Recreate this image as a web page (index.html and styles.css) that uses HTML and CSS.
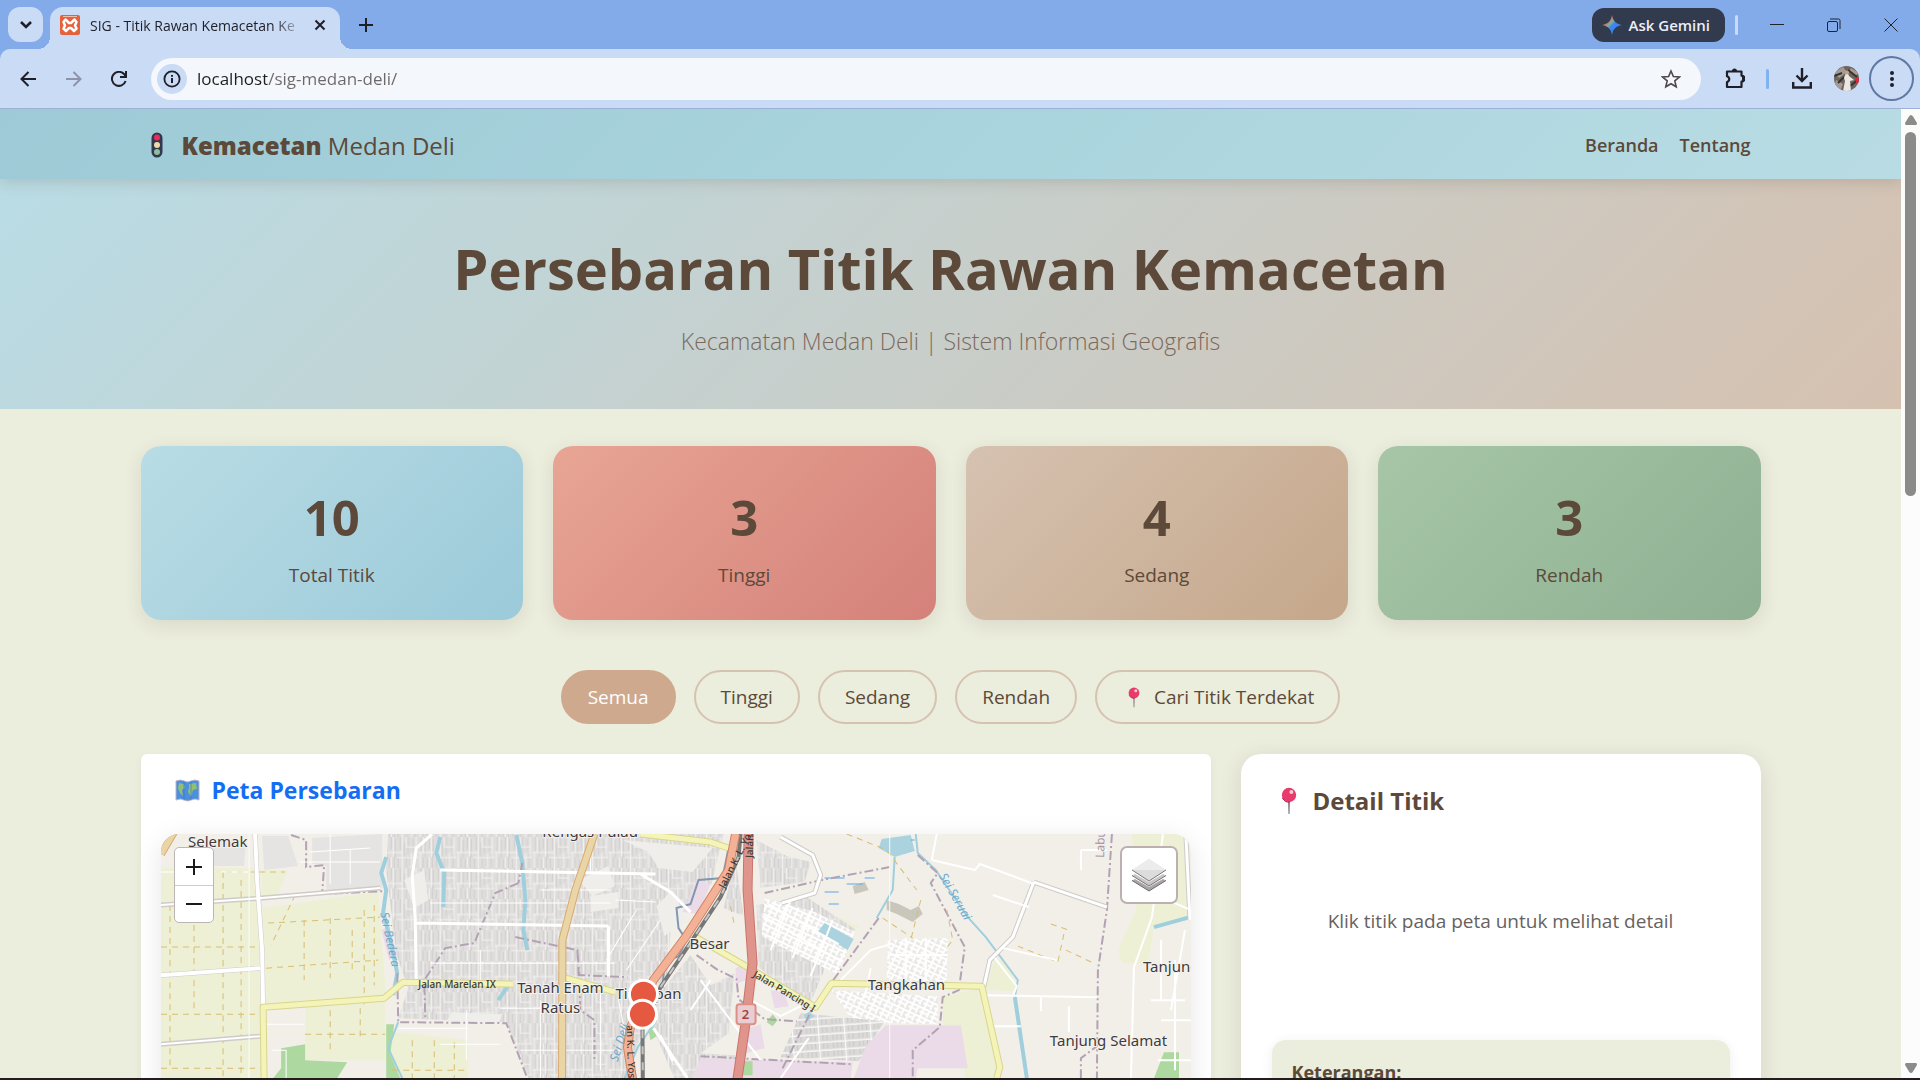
FILE: index.html
```html
<!DOCTYPE html>
<html lang="id">
<head>
<meta charset="utf-8">
<meta name="viewport" content="width=device-width, initial-scale=1">
<title>SIG - Titik Rawan Kemacetan</title>
<link rel="stylesheet" href="styles.css">
</head>
<body>
<svg class="defs" aria-hidden="true">
  <defs>
    <symbol id="pin" viewBox="0 0 16 28">
      <path d="M7 14h2l-.4 13h-1.2z" fill="#8d8488"/>
      <circle cx="8" cy="8" r="7.2" fill="#e83a6b"/>
      <path d="M1.500 11a7.200 7.200 0 0 0 7 4.200" fill="none" stroke="#9c2a52"/>
      <circle cx="10.400" cy="5" r="2" fill="#f3cdd2"/>
    </symbol>
  </defs>
</svg>

<header class="chrome">
  <div class="tabstrip">
    <button class="tab-search" aria-label="Cari tab"><svg width="14" height="10" viewBox="0 0 14 10"><path d="M2 2l5 5 5-5" fill="none" stroke="#1f1f28" stroke-width="2.600"/></svg></button>
    <div class="tab">
      <svg class="favicon" width="20" height="20" viewBox="0 0 20 20"><rect width="20" height="20" rx="2" fill="#e4613c"/><path d="M3 1.500h14" stroke="#f6b9a4"/><path d="M5.500 4.500L9 8h2l3.500-3.500 2 2.500-1.500 3.500 1.500 3-2.500 2.500L11 13H9l-3 3-2.500-2.500 1.500-3L3.500 7z" fill="none" stroke="#fff" stroke-width="2.500" stroke-linejoin="round"/></svg>
      <span class="tab-title">SIG - Titik Rawan Kemacetan Ke</span>
      <button class="tab-close" aria-label="Tutup tab"><svg width="12" height="12" viewBox="0 0 12 12"><path d="M1.500 1.500l9 9m0-9l-9 9" stroke="#1f1f28" stroke-width="2"/></svg></button>
    </div>
    <button class="new-tab" aria-label="Tab baru"><svg width="14" height="14" viewBox="0 0 14 14"><path d="M7 0v14M0 7h14" stroke="#1f1f28" stroke-width="2"/></svg></button>
    <button class="gemini"><svg width="20" height="20" viewBox="0 0 20 20"><defs><linearGradient id="gem" x1="0" y1="0" x2="1" y2="1"><stop offset=".25" stop-color="#ee5b4a"/><stop offset=".42" stop-color="#7fae9a"/><stop offset=".52" stop-color="#3f86ee"/><stop offset="1" stop-color="#2f7cf6"/></linearGradient></defs><path d="M10 0c1 6 4 9 10 10-6 1-9 4-10 10-1-6-4-9-10-10 6-1 9-4 10-10z" fill="url(#gem)"/></svg>Ask Gemini</button>
    <span class="strip-divider"></span>
    <div class="window-buttons">
      <button aria-label="Kecilkan"><svg width="14" height="14" viewBox="0 0 14 14"><path d="M0 6.500h14" stroke="#1f2430"/></svg></button>
      <button aria-label="Pulihkan"><svg width="14" height="14" viewBox="0 0 14 14"><rect x=".5" y="3.500" width="10" height="10" rx="1.500" fill="none" stroke="#1f2430"/><path d="M3 1h8.500a1.500 1.500 0 0 1 1.500 1.500V11" fill="none" stroke="#1f2430"/></svg></button>
      <button aria-label="Tutup"><svg width="14" height="14" viewBox="0 0 14 14"><path d="M.5.500l13 13m0-13l-13 13" stroke="#1f2430"/></svg></button>
    </div>
  </div>
  <div class="toolbar">
    <button class="tool" aria-label="Kembali"><svg width="17" height="16" viewBox="0 0 17 16"><path d="M16 8H2M8.500 1L1.500 8l7 7" fill="none" stroke="#1f1f28" stroke-width="2"/></svg></button>
    <button class="tool" aria-label="Maju"><svg width="17" height="16" viewBox="0 0 17 16"><path d="M1 8h14M8.500 1l7 7-7 7" fill="none" stroke="#8b94a8" stroke-width="2"/></svg></button>
    <button class="tool" aria-label="Muat ulang"><svg width="16" height="16" viewBox="0 0 16 16"><path d="M14.600 10A7 7 0 1 1 13 3l1.500 2" fill="none" stroke="#1f1f28" stroke-width="2"/><path d="M15 0v6H9" fill="none" stroke="#1f1f28" stroke-width="2"/></svg></button>
    <div class="omnibox">
      <button class="site-info" aria-label="Info situs"><svg width="18" height="18" viewBox="0 0 18 18"><circle cx="9" cy="9" r="7.600" fill="none" stroke="#1f1f28" stroke-width="1.800"/><path d="M9 8v5M9 5v1.800" stroke="#1f1f28" stroke-width="2"/></svg></button>
      <input class="url" type="text" value="localhost/sig-medan-deli/" aria-label="Alamat">
      <button class="star" aria-label="Bookmark"><svg width="20" height="20" viewBox="0 0 20 20"><path d="M10 2l2.400 5.500 6 .5-4.600 3.900 1.400 5.900L10 14.700l-5.200 3.100 1.400-5.900L1.600 8l6-.5z" fill="none" stroke="#51484a" stroke-width="1.600"/></svg></button>
    </div>
    <button class="tool ext" aria-label="Ekstensi"><svg width="20" height="21" viewBox="0 0 20 21"><path d="M2 3.500h14.500v4.200a3 3 0 0 1 0 6V19H2v-5a3 3 0 0 0 0-5.800z" fill="none" stroke="#1f1f28" stroke-width="2.200" stroke-linejoin="round"/><path d="M7 3a2.500 2.500 0 0 1 5 0zM17 8.500a2.400 2.400 0 0 1 0 4.800z" fill="#1f1f28"/></svg></button>
    <span class="tool-divider"></span>
    <button class="tool" aria-label="Unduhan"><svg width="20" height="21" viewBox="0 0 20 21"><path d="M10 0v12M4.500 7.500L10 13l5.500-5.500M1.200 14v5.500h17.600V14" fill="none" stroke="#1f1f28" stroke-width="2.400"/></svg></button>
    <button class="tool" aria-label="Profil"><svg width="25" height="25" viewBox="0 0 25 25"><defs><clipPath id="av"><circle cx="12.500" cy="12.500" r="12.500"/></clipPath></defs><g clip-path="url(#av)"><path d="M0 0h25v25H0z" fill="#6d6560"/><path d="M0 6l9-5 4 5-8 6zM2 14l7 4-3 7-6-3zM17 2l8 5-4 3-6-4z" fill="#a59b92"/><path d="M0 10l8-3M14 4l9 7M4 17l6-6M16 20l8-6" stroke="#37332f" stroke-width="2"/><path d="M22 12h3v5h-3z" fill="#d52a3c"/><path d="M12 7q2-1 3 3l5 4-4 1 1 10H9l2-10-1-3z" fill="#ebe8e4"/><circle cx="13" cy="6.500" r="2" fill="#c9a18b"/></g></svg></button>
    <button class="menu" aria-label="Menu"><svg width="4" height="16" viewBox="0 0 4 16" fill="#1f1f28"><circle cx="2" cy="2" r="2"/><circle cx="2" cy="8" r="2"/><circle cx="2" cy="14" r="2"/></svg></button>
  </div>
</header>

<div class="viewport">
  <div class="page">
    <nav class="navbar">
      <div class="container nav-row">
        <a class="brand" href="#"><svg width="12" height="26" viewBox="0 0 12 26"><rect x=".5" y=".5" width="11" height="25" rx="5.500" fill="#33384e"/><circle cx="6" cy="5.500" r="3" fill="#f0295a"/><circle cx="6" cy="13" r="3" fill="#f0d9a6"/><circle cx="6" cy="20" r="3" fill="#8fbf9c"/></svg><span><strong>Kemacetan</strong> Medan Deli</span></a>
        <div class="nav-links"><a href="#">Beranda</a><a href="#">Tentang</a></div>
      </div>
    </nav>

    <section class="hero">
      <h1>Persebaran Titik Rawan Kemacetan</h1>
      <p>Kecamatan Medan Deli | Sistem Informasi Geografis</p>
    </section>

    <main class="container">
      <section class="stats">
        <div class="stat stat-total"><b>10</b><span>Total Titik</span></div>
        <div class="stat stat-high"><b>3</b><span>Tinggi</span></div>
        <div class="stat stat-mid"><b>4</b><span>Sedang</span></div>
        <div class="stat stat-low"><b>3</b><span>Rendah</span></div>
      </section>

      <div class="filters">
        <button class="filter active">Semua</button>
        <button class="filter">Tinggi</button>
        <button class="filter">Sedang</button>
        <button class="filter">Rendah</button>
        <button class="filter near"><svg width="12" height="21"><use href="#pin"/></svg>Cari Titik Terdekat</button>
      </div>

      <div class="panels">
        <section class="map-card">
          <h2><svg width="25" height="23" viewBox="0 0 25 23"><path d="M1 2q5-2 8 0 4 2 7 0 4-2 8 0v19q-4-2-8 0-3 2-7 0-3-2-8 0z" fill="#4b8fe0" stroke="#b9b4c4"/><path d="M4 4l5 1 1 4-3 2 1 6-3-3-2-5zM14 5l7-1 1 6-4 1-2 7-3-5 1-4z" fill="#8ebf74"/><path d="M9 2v19M16 2v19" stroke="#3a6fb8" opacity=".6"/></svg>Peta Persebaran</h2>
          <div class="map">
            <svg class="map-art" viewBox="161 834 1029 500" preserveAspectRatio="xMinYMin slice">
              <defs>
                <pattern id="blocks" width="38" height="31" patternUnits="userSpaceOnUse">
                  <rect width="38" height="31" fill="#e0dedd"/>
                  <path d="M3 0v14M7 3v17M11 0v12M15 2v18M20 0v13M24 5v15M28 0v17M33 2v12M5 20v11M9 22v9M14 19v12M18 21v10M26 20v11M30 19v10M35 17v14" stroke="#d2d0cf" fill="none"/>
                  <path d="M0 15.500h22M17 20.500h21M5 0v15M13 0v20M22 0v31M31 16v15M36 0v20M2 16v15M26 0v10h10M11 20v11" stroke="#f4f3f1" fill="none"/>
                </pattern>
                <pattern id="streets" width="12" height="9" patternUnits="userSpaceOnUse" patternTransform="rotate(25)">
                  <rect width="12" height="9" fill="#eae8e6"/>
                  <path d="M0 2h12M0 6h9M3 0v9M9 2v7" stroke="#fff" stroke-width="2" fill="none"/>
                </pattern>
                <pattern id="rows" width="26" height="8" patternUnits="userSpaceOnUse" patternTransform="rotate(-4)">
                  <rect width="26" height="8" fill="#dcdad9"/>
                  <path d="M4 2v5M8 2v5M12 2v5M20 2v5M24 2v5" stroke="#cbc9c8"/>
                  <path d="M0 1h26M16 0v8" stroke="#fff"/>
                </pattern>
              </defs>
              <rect x="161" y="834" width="1029" height="500" fill="#f2efe9"/>
              <g fill="#eef0d5">
                <path d="M161 868h95l4 60 3 150H161zM262 870h25l-10 28-15 2zM262 908l116-16 8 106-121 9zM305 1006l80-8v62h-80zM390 1036l8-4 70 8v38h-76z"/>
                <path d="M942 997l40-10 13 78 2 13h-33l-4-53h-18zM984 990l10-32 12 4 12 30-22-2zM1131 834h56l2 83-36 10-6 36h-26l-4-13 18-40z"/>
                <path d="M846 940l12-14-24-10z"/>
              </g>
              <path d="M206 840h40l-2 26h-60l8-20zM262 836h26l10 30-34 4zM312 838l70-4v54l-56 4v-26l-14-2z" fill="#e6e4e2"/>
              <path d="M388 834h335l-12 50-40 34-4 56-18 26-8 30-12 48H528l-22-56-108-4 10-30-12-34-10-84z" fill="url(#blocks)"/>
              <path d="M690 955l20 30 24-12-6 60-28 20 34 2-2 23h-58l-20-46-2-30zM735 860l-12 48 20 8zM756 840l30 16 24 6-6 20-44 6z" fill="url(#blocks)"/>
              <path d="M756 905l50-8 48 32-30 40-16 38-50-40z" fill="url(#blocks)"/>
              <path d="M764 898l50 14 40 20-17 42-58-28-18-10zM887 940l60-2-1 44-60-3zM831 990l106 6v28l-84-2z" fill="url(#streets)"/>
              <path d="M800 1013l84 8-26 40-78-4z" fill="url(#rows)"/>
              <path d="M404 880l20-10 4 30-14 8zM578 880l30-14 6 20-22 10zM452 1012l50 2-4 10-52-3zM622 840l90 8-20 24-34-4-10-16zM672 890l14 30-22 16-8-30zM590 896l28-4v16l-28 4z" fill="#f0eeea"/>
              <g fill="#ebdbe8">
                <path d="M885 1025h57l18 0 7 43h-50l-2 10h-62l12-32zM700 1058l152 4-2 16H692zM696 880l14 4-12 30-16-2zM735 968l12-6 4 16-16 6zM770 990l14 2 4 14-14 2zM742 1030l18-6 4 24-22 6zM381 930l8-4 8 30-8 4z"/>
              </g>
              <g fill="#add9a0">
                <path d="M281 1048l24-4v16l42 2-10 16h-64l8-10zM386 1024h8l-4 30 10 24h-14zM1163 1052h15v26h-25zM742 1061h10v14h-10zM766 1022l6-8 5 6-5 6zM648 1030l6-4 2 10-6 4z"/>
              </g>
              <path d="M878 848l3-9 29-4 4 16-20 6zM824 923l29 16-6 11-30-18zM803 1015l6-4 4 5-6 5z" fill="#aad3df"/>
              <path d="M886 900l12 4 12 6 8-4 4 8-10 8-16-8-10-4zM852 886l12-4 4 8-14 4z" fill="#c9c6bb"/>
              <g fill="none" stroke="#9fcfdd" stroke-width="3" stroke-linejoin="round">
                <path d="M386 857l-5 16 5 17-3 22 7 28 7 33-4 22M440 837l-4 16 8 20-1 34M516 835l6 28 3 37-2 30 4 20M498 1000l12-18M1014 997l12 81M1153 927l36-10" stroke-width="4"/>
                <path d="M915 834l2 19 18 17 32 47 18 20 32 43-3 17M894 857l-2 33-16 28M398 1022l-10 26 14 30M656 1020l-18 26-14 32" stroke-width="2"/>
                <path d="M824 878h20M824 892h14M846 884h16M828 904h10M910 840h4M864 878h10" stroke="#58a8e8" stroke-width="1"/>
              </g>
              <g fill="none" stroke="#b3a2b3" stroke-width="2" stroke-dasharray="9 3 2 3">
                <path d="M291 835l15 5v27l18-2-2 29 62-3M397 973l1 49 108 1 21 55M518 883l-23 10-21 50-29 5-21 32 1 37M515 937l62 13 2 25 48 2M577 950l3 60 14 10v40M764 893l57-13 68-13"/>
                <path d="M917 855l20 18-7 10 34 64-6 43-16 7-3 30-27 23v28M1111 834l-5 76-9 60-1 108M696 955l20 14 20 10 2 20 26 20 32 2M700 1056l150 8M1080 1078v-20l16-12M522 863l-4 20M878 918l-66 90-30 60"/>
                <path d="M728 848l-6 30-24 2-8 24-14 4 2 20 8 12-8 16-14 6-2 26" stroke="#8298b0" stroke-dasharray="none"/>
              </g>
              <g fill="none" stroke="#d7bd72" stroke-width="1" stroke-dasharray="6 5">
                <path d="M194 870v140M223 872v206M241 880v198M170 905v160M161 947h96M161 1014h100M161 1068h100M268 923l112-6M266 968l112-8M304 920v60M330 918v60M352 930v40M364 910v94M374 905v80M295 895l-24 50M305 1034h80M330 1010v40M360 1008v30M412 1040v38M434 1040v38M454 1042v36M392 1070h74M215 872h70"/>
                <path d="M846 834l40 16 30 40M920 900l-10 40M946 910l6 30-8 10M882 918l30 20M1063 934l-6 28-40-16M1065 950l30 14M1050 924l18 6M730 906l4 20"/>
              </g>
              <g fill="none" stroke="#cfcbc8" stroke-width="5" stroke-linejoin="round">
                <path d="M255 834l2 46 5 70 1 55M161 975l99-7M161 905l101-7 118-10M161 1044l100-8"/>
                <path d="M1033 882l-21 55-23 23-6 27M1033 882l73 25M1185 837l4 83M780 837l32 18 8 20-6 18-33 10"/>
              </g>
              <g fill="none" stroke="#fff" stroke-width="3" stroke-linejoin="round">
                <path d="M255 834l2 46 5 70 1 55M161 975l99-7" stroke-width="4"/>
                <path d="M1033 882l-21 55-23 23-6 27M1033 882l73 25M1185 837l4 83M780 837l32 18 8 20-6 18-33 10"/>
                <path d="M432 834l-16 14-4 28 3 44 1 62M416 923l192 3M440 870l215 4M608 926v50M653 1028l34 50M640 874l30 18 20 20" />
                <path d="M161 905l101-7 118-10M161 1044l100-8M931 860l43 10 5-6 33 12 21 8M1162 834l-11 83-18 50-3 111M983 995l113 2M1040 997v14M1068 1006v26M1080 850h26M1080 850v20M931 860l5-26M992 895l36 12M1056 960l-54-12M780 1078l28-40M994 958l22 28-4 10M1120 880l70 30M1157 1060h33M1174 960v110M660 1035l12 26" stroke-width="2"/>
                <path d="M430 903h180M430 963h184M480 950v34M500 1008h60M540 890h70M440 1044h60M520 1050h100M590 834v40M636 910l-30 50M660 920l-34 50M615 900l40 2M161 872h90M300 862h80M330 834v50M350 850v34M200 860l14-20M310 852l60-4M466 1010v50M398 1028h70M264 1024h40M272 1050h14v28M540 1000v78M600 990v80M618 1000l10 50" stroke-width="1"/>
                <path d="M768 904l70 40M762 916l80 46M790 900l-20 50M812 908l-20 50M832 920l-22 56M750 1000l30 16 20-10M700 980l60 80M690 1010l20-30M870 968l-6 30M905 938v42M925 938v42M887 955h60M990 1026h30M1150 1000h34M1160 940v60M1160 1020h30M1184 930l-14 80M840 980l30-30 20-6" stroke-width="2"/>
              </g>
              <g fill="none" stroke-linejoin="round">
                <path d="M269 1334l-5-256-1-71 121-9 19-16 110 2M562 977l53 15M640 834l70 8 18 6M688 933l59 34 68 40 16-24 150 3 18 81-3 11" stroke="#d8d58e" stroke-width="7"/>
                <path d="M269 1334l-5-256-1-71 121-9 19-16 110 2M562 977l53 15M640 834l70 8 18 6M688 933l59 34 68 40 16-24 150 3 18 81-3 11" stroke="#f4f4b8" stroke-width="5"/>
                <path d="M594 834l-19 56-13 50-1 394M161 854l13-22" stroke="#d8aa70" stroke-width="8"/>
                <path d="M594 834l-19 56-13 50-1 394M161 854l13-22" stroke="#ead5a6" stroke-width="6"/>
                <path d="M740 834l-2 23-18 40-33 50-27 40-18 43 2 304" stroke="#777" stroke-width="4"/>
                <path d="M738 857l-18 40-33 50-27 40M642 1030l2 304" stroke="#c9c6c4" stroke-width="2" stroke-dasharray="8 8"/>
                <path d="M735 834l-7 36-21 33-22 34-32 43-23 47-3 20 5 31 10 256" stroke="#cf8466" stroke-width="9"/>
                <path d="M735 834l-7 36-21 33-22 34-32 43-23 47-3 20 5 31 10 256" stroke="#f3b196" stroke-width="7"/>
                <path d="M748 834l-1 56 5 73-7 60-8 55-20 256" stroke="#c9756c" stroke-width="10"/>
                <path d="M748 834l-1 56 5 73-7 60-8 55-20 256" stroke="#e0958c" stroke-width="8"/>
                <path d="M249 834v500M889 834v500" stroke="#fbfaf6"/>
              </g>
              <g class="place">
                <text x="188" y="847">Selemak</text>
                <text x="542" y="837">Rengas Pulau</text>
                <text x="689" y="949">Besar</text>
                <text x="560" y="993" text-anchor="middle">Tanah Enam</text>
                <text x="560" y="1013" text-anchor="middle">Ratus</text>
                <text x="615" y="999">Titipapan</text>
                <text x="867" y="990">Tangkahan</text>
                <text x="1049" y="1046">Tanjung Selamat</text>
                <text x="1142" y="972">Tanjung</text>
              </g>
              <g class="road-name">
                <text x="418" y="988">Jalan Marelan IX</text>
                <text transform="translate(752 976) rotate(31)">Jalan Pancing I</text>
                <text transform="translate(724 889) rotate(-63)">Jalan K. L. Yos</text>
                <text transform="translate(752 858) rotate(-88)">Jalan K. L.</text>
                <text transform="translate(626 1025) rotate(88)">an K. L. Yos</text>
              </g>
              <g class="river-name">
                <text transform="translate(380 913) rotate(78)">Sei Bedera</text>
                <text transform="translate(938 876) rotate(60)">Sei Seruai</text>
                <text transform="translate(617 1062) rotate(-72)">Sei Deli</text>
                <text class="district" transform="translate(1103 858) rotate(-88)">Labuhan</text>
              </g>
              <rect x="736" y="1004" width="19" height="20" rx="3" fill="#e9cdd2" stroke="#dd8f86" stroke-width="2"/>
              <text class="shield" x="745" y="1019" text-anchor="middle">2</text>
              <g fill="#e4593f" stroke="#fff" stroke-width="3"><circle cx="643" cy="994" r="14"/><circle cx="642" cy="1014" r="14"/></g>
            </svg>
            <div class="zoom-control"><button aria-label="Perbesar"><svg width="16" height="16" viewBox="0 0 16 16"><path d="M8 0v16M0 8h16" stroke="#1a1a1a" stroke-width="2"/></svg></button><button aria-label="Perkecil"><svg width="16" height="16" viewBox="0 0 16 16"><path d="M0 8h16" stroke="#1a1a1a" stroke-width="2"/></svg></button></div>
            <button class="layers" aria-label="Lapisan"><svg width="34" height="34" viewBox="0 0 34 34"><path d="M0 22.500l3-1.500 14 8 14-8 3 1.500L17 33z" fill="#a9a6a8"/><path d="M0 22.500L17 33l17-10.500" fill="none" stroke="#6e6b6c"/><path d="M0 17.500l3-1.500 14 8 14-8 3 1.500L17 28z" fill="#c9c7c6"/><path d="M0 17.500L17 28l17-10.500" fill="none" stroke="#767372"/><path d="M17 1l17 11-17 11L0 12z" fill="#dcdcdc"/><path d="M17 1l17 11H0z" fill="#ececec"/><path d="M0 12l17 11 17-11" fill="none" stroke="#777"/></svg></button>
          </div>
        </section>

        <aside class="detail-card">
          <h2><svg width="16" height="28"><use href="#pin"/></svg>Detail Titik</h2>
          <p class="hint">Klik titik pada peta untuk melihat detail</p>
          <div class="legend"><h3>Keterangan:</h3></div>
        </aside>
      </div>
    </main>
  </div>
  <div class="scrollbar" aria-hidden="true">
    <svg width="12" height="10" viewBox="0 0 12 10"><path d="M6 0q1 0 2 1.500l4 6.500q0 2-1 2H1q-1 0-1-2l4-6.500Q5 0 6 0z" fill="#8b8b89"/></svg>
    <span class="thumb"></span>
    <svg class="down" width="12" height="10" viewBox="0 0 12 10"><path d="M6 10q1 0 2-1.500L12 2q0-2-1-2H1Q0 0 0 2l4 6.500Q5 10 6 10z" fill="#8b8b89"/></svg>
  </div>
</div>
</body>
</html>
```
FILE: styles.css
```css
* { box-sizing: border-box; }

html, body { height: 100%; }

body {
  margin: 0;
  display: flex;
  flex-direction: column;
  overflow: hidden;
  border-bottom: 2px solid #231c1c;
  background: #ebeddd;
  color: #5c4939;
  font-family: "Open Sans", "Noto Sans", sans-serif;
  font-size: 19px;
}

button {
  padding: 0;
  border: 0;
  background: none;
  color: inherit;
  font: inherit;
}

a { color: inherit; text-decoration: none; }
h1, h2, h3, p { margin: 0; }
svg { display: block; flex: none; }

.defs { position: absolute; width: 0; height: 0; }

/* Browser window */
.chrome { flex: none; background: #84abe9; border-bottom: 1px solid #9db1d6; }

.tabstrip {
  display: flex;
  align-items: center;
  height: 49px;
  padding: 7px 0 0 8px;
}

.tab-search {
  display: grid;
  place-items: center;
  width: 35px;
  height: 35px;
  margin-bottom: 7px;
  border-radius: 12px;
  background: #cadbf5;
}

.tab {
  position: relative;
  display: flex;
  align-items: center;
  gap: 10px;
  width: 290px;
  height: 42px;
  margin-left: 7px;
  padding: 0 14px 6px 10px;
  border-radius: 13px 13px 0 0;
  background: #cadbf5;
}

.tab::before,
.tab::after {
  content: "";
  position: absolute;
  bottom: 0;
  width: 12px;
  height: 12px;
}

.tab::before { right: 100%; background: radial-gradient(circle at 0 0, transparent 12px, #cadbf5 12px); }
.tab::after { left: 100%; background: radial-gradient(circle at 100% 0, transparent 12px, #cadbf5 12px); }

.tab-title {
  flex: 1;
  overflow: hidden;
  white-space: nowrap;
  color: #1f1f28;
  font-size: 14px;
  -webkit-mask-image: linear-gradient(90deg, #000 86%, transparent);
  mask-image: linear-gradient(90deg, #000 86%, transparent);
}

.new-tab { margin: 0 auto 6px 19px; }

.gemini {
  display: flex;
  align-items: center;
  gap: 7px;
  height: 34px;
  margin-bottom: 7px;
  padding: 0 15px 0 10px;
  border-radius: 12px;
  background: #323a4e;
  color: #eceff6;
  font-size: 15px;
  font-weight: 600;
}

.strip-divider { width: 3px; height: 20px; margin: 0 10px 7px; border-radius: 2px; background: #cadbf5; }

.window-buttons { display: flex; padding-right: 1px; margin-bottom: 6px; }
.window-buttons button { display: grid; place-items: center; width: 57px; height: 30px; }

.toolbar {
  display: flex;
  align-items: center;
  height: 59px;
  padding: 0 6px;
  border-radius: 10px 10px 0 0;
  background: #cadbf5;
}

.tool { display: grid; place-items: center; width: 45px; height: 40px; }

.omnibox {
  flex: 1;
  display: flex;
  align-items: center;
  height: 42px;
  margin-left: 10px;
  padding: 0 20px 0 6px;
  border-radius: 21px;
  background: #f4f7fc;
}

.site-info { display: grid; place-items: center; width: 30px; height: 30px; border-radius: 50%; background: #cadbf5; }

.url {
  flex: 1;
  min-width: 0;
  padding: 0 0 0 10px;
  border: 0;
  outline: 0;
  color: transparent;
  background: linear-gradient(90deg, #1f1f1f 80px, #6c6868 80px);
  -webkit-background-clip: text;
  background-clip: text;
  font-family: inherit;
  font-size: 17px;
}

.ext { width: 40px; margin-left: 14px; }
.tool-divider { width: 3px; height: 20px; margin: 0 10px 0 11px; border-radius: 2px; background: #7fb2ee; }

.menu {
  display: grid;
  place-items: center;
  width: 45px;
  height: 45px;
  border: 2px solid #6078a3;
  border-radius: 50%;
}

/* Page area */
.viewport { flex: 1; display: flex; min-height: 0; overflow: hidden; }
.page { flex: 1; min-width: 0; overflow: hidden; }

.container { width: 100%; max-width: 1650px; margin: 0 auto; padding: 0 15px; }

.navbar {
  position: relative;
  padding: 16px 0 14px;
  background: linear-gradient(135deg, #9dcad6, #a9d4dd 50%, #b9dce4);
  box-shadow: 0 3px 14px rgba(93, 74, 58, 0.2);
}

.nav-row { display: flex; align-items: center; justify-content: space-between; height: 40px; }
.brand { display: flex; align-items: center; gap: 19px; padding-left: 10px; font-size: 24px; font-weight: 500; }
.brand strong { font-weight: 800; }
.nav-links { display: flex; gap: 21px; padding-right: 10px; font-size: 18px; font-weight: 600; }

.hero {
  display: flex;
  flex-direction: column;
  align-items: center;
  gap: 18px;
  height: 230px;
  padding-top: 53px;
  background: linear-gradient(135deg, #b9dce5, #d6c1b0);
  text-align: center;
}

.hero h1 { font-size: 56px; font-weight: 700; line-height: 72px; }
.hero p { color: #7d695c; font-size: 23px; font-weight: 300; line-height: 38px; }

.stats { display: grid; grid-template-columns: repeat(4, 1fr); gap: 30px; padding-top: 37px; }

.stat {
  display: flex;
  flex-direction: column;
  align-items: center;
  gap: 10px;
  height: 174px;
  padding-top: 40px;
  border-radius: 20px;
  box-shadow: 0 5px 18px rgba(93, 74, 58, 0.12);
}

.stat b { font-size: 49px; line-height: 62px; }
.stat span { line-height: 34px; }
.stat-total { background: linear-gradient(135deg, #b9dce5, #9bcad9); }
.stat-high { background: linear-gradient(135deg, #e8a594, #d4817a); }
.stat-mid { background: linear-gradient(135deg, #d6c2b1, #c5a78a); }
.stat-low { background: linear-gradient(135deg, #a6c6a7, #8fb092); }

.filters { display: flex; justify-content: center; gap: 18px; padding: 50px 0 30px; }

.filter {
  display: flex;
  align-items: center;
  height: 54px;
  padding: 0 25px;
  border: 2px solid #d6c2b1;
  border-radius: 27px;
}

.filter.active { border-color: #cea98e; background: #cea98e; color: #fff; }
.near { gap: 14px; padding: 0 24px 0 31px; }

.panels { display: grid; grid-template-columns: 1070fr 520fr; gap: 30px; }

.map-card {
  padding: 16px 20px 20px;
  border-radius: 6px;
  background: #fff;
  box-shadow: 0 3px 8px rgba(0, 0, 0, 0.05);
}

.map-card h2,
.detail-card h2 { display: flex; align-items: center; font-size: 24px; font-weight: 700; line-height: 40px; }
.map-card h2 { gap: 12px; margin-bottom: 24px; padding-left: 14px; color: #146ef5; font-size: 23px; }

.map {
  position: relative;
  height: 500px;
  overflow: hidden;
  border-radius: 18px;
  box-shadow: 0 6px 28px rgba(0, 0, 0, 0.1);
}

.map-art { width: 100%; height: 100%; }

.place text { font: 400 15px "Noto Sans", sans-serif; fill: #3f3b3b; paint-order: stroke; stroke: #f4f2f0; stroke-width: 2px; }
.road-name text { font: 500 10px "Noto Sans", sans-serif; fill: #3c3a36; }
.river-name text { font: italic 12px "Noto Sans", sans-serif; fill: #6fa8cc; }
.river-name .district { font-style: normal; fill: #a795a8; }
.shield { font: 600 13px "Noto Sans", sans-serif; fill: #a0463c; }

.zoom-control {
  position: absolute;
  top: 13px;
  left: 13px;
  border: 1px solid #bcb5b4;
  border-radius: 5px;
  background: #fff;
  overflow: hidden;
}

.zoom-control button { display: grid; place-items: center; width: 38px; height: 37px; }
.zoom-control button + button { border-top: 1px solid #ccc; }

.layers {
  position: absolute;
  top: 12px;
  right: 13px;
  display: grid;
  place-items: center;
  width: 58px;
  height: 58px;
  border: 2px solid #bcb1b0;
  border-radius: 7px;
  background: #fff;
}

.detail-card {
  padding: 27px 31px;
  border-radius: 20px;
  background: #fff;
  box-shadow: 0 5px 22px rgba(93, 74, 58, 0.14);
}

.detail-card h2 { gap: 16px; padding-left: 9px; }
.hint { padding: 84px 0 103px; color: #66625f; line-height: 32px; text-align: center; }

.legend {
  height: 220px;
  padding: 18px 20px;
  border-radius: 14px;
  background: #ebeddd;
  box-shadow: 0 2px 12px rgba(0, 0, 0, 0.07);
}

.legend h3 { font-size: 18px; line-height: 28px; }

.scrollbar {
  display: flex;
  flex-direction: column;
  align-items: center;
  width: 19px;
  padding: 6px 0 5px;
  background: #fcfcfc;
}

.thumb { width: 11px; height: 38%; margin-top: 7px; border-radius: 6px; background: #8b8b89; }
.down { margin-top: auto; }
```
